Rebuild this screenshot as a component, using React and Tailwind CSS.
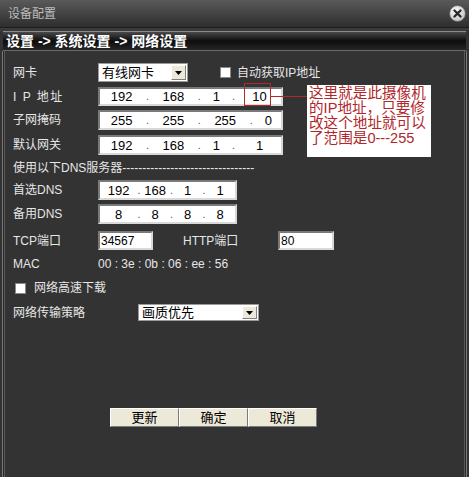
import React from "react";

const CJK = { fontFamily: '"Liberation Sans", "Noto Sans CJK SC", sans-serif' };

function Sunken({ className = "", children }) {
  return (
    <div
      className={
        "bg-white border-2 border-t-[#7a7a7a] border-l-[#7a7a7a] border-b-[#d8d8d8] border-r-[#d8d8d8] text-black " +
        className
      }
    >
      {children}
    </div>
  );
}

function Arrow() {
  return (
    <div className="w-[15px] h-full bg-[#ece9d8] border border-t-white border-l-white border-b-[#808080] border-r-[#808080] flex items-center justify-center">
      <svg width="7" height="4" viewBox="0 0 7 4">
        <polygon points="0,0 7,0 3.5,4" fill="#000" />
      </svg>
    </div>
  );
}

function Select({ className, text }) {
  return (
    <div
      className={
        "bg-white border border-[#9a9a9a] flex items-stretch text-black text-[13px] " + className
      }
    >
      <div className="flex-1 flex items-center pl-[3px] leading-none">{text}</div>
      <div className="p-[1px]">
        <Arrow />
      </div>
    </div>
  );
}

function IpField({ className, values, seg, dot }) {
  return (
    <Sunken className={"flex items-center text-[13px] leading-none " + className}>
      {values.map((v, i) => (
        <React.Fragment key={i}>
          <div className="flex items-center justify-center h-full" style={{ width: seg[i] }}>
            {v}
          </div>
          {i < 3 && (
            <div className="text-[11px] text-[#555] text-center" style={{ width: dot }}>
              .
            </div>
          )}
        </React.Fragment>
      ))}
    </Sunken>
  );
}

function Label({ children, className = "" }) {
  return (
    <div className={"w-[85px] text-[12px] text-[#e6e6e6] leading-none " + className}>
      {children}
    </div>
  );
}

function Btn({ children }) {
  return (
    <div className="w-[69px] h-[19px] bg-[#ece9d8] border border-t-white border-l-white border-b-[#7a7a7a] border-r-[#7a7a7a] flex items-center justify-center text-[13px] text-black leading-none">
      {children}
    </div>
  );
}

export default function App() {
  return (
    <div className="w-[469px] h-[477px] bg-[#333333] relative overflow-hidden flex flex-col" style={CJK}>
      {/* title bar */}
      <div className="h-[28px] shrink-0 bg-gradient-to-b from-[#5a5a5a] via-[#444444] to-[#2e2e2e] border-b border-[#1e1e1e] flex items-center justify-between pl-[8px] pr-[3px]">
        <div className="text-[12px] text-[#bdbdbd] leading-none">设备配置</div>
        <svg width="17" height="17" viewBox="0 0 17 17">
          <defs>
            <radialGradient id="cg" cx="40%" cy="35%" r="70%">
              <stop offset="0%" stopColor="#ffffff" />
              <stop offset="100%" stopColor="#bdbdbd" />
            </radialGradient>
          </defs>
          <circle cx="8.5" cy="8.5" r="8" fill="url(#cg)" stroke="#555" strokeWidth="0.8" />
          <path d="M5.5 5.5 L11.5 11.5 M11.5 5.5 L5.5 11.5" stroke="#2a2a2a" strokeWidth="2.4" strokeLinecap="round" />
        </svg>
      </div>
      <div className="h-[3px] shrink-0 bg-[#3a3a3a]" />
      {/* breadcrumb */}
      <div className="h-[20px] shrink-0 mx-[3px] border-t border-[#8a8a8a] border-b border-b-[#6a6a6a] bg-gradient-to-b from-[#4a4a4a] via-[#0e0e0e] to-[#262626] flex items-center pl-[3px]">
        <div className="text-[14px] font-bold text-white leading-none">设置 -&gt; 系统设置 -&gt; 网络设置</div>
      </div>

      {/* body */}
      <div className="flex-1 flex mx-[2px]">
        <div className="w-[1px] bg-[#7a7a7a]" />
        <div className="w-[1px] bg-[#262626]" />
        <div className="w-[1px] bg-[#5a5a5a]" />
        <div className="flex-1 flex flex-col pl-[8px] relative">
          {/* 网卡 */}
          <div className="mt-[12px] h-[19px] flex items-center">
            <Label>网卡</Label>
            <Select className="w-[90px] h-[19px]" text="有线网卡" />
            <div className="ml-[32px] w-[11px] h-[11px] bg-white border border-[#8a8a8a]" />
            <div className="ml-[6px] text-[12px] text-[#e6e6e6] leading-none">自动获取IP地址</div>
          </div>
          {/* IP */}
          <div className="mt-[5px] h-[19px] flex items-center">
            <Label className="tracking-[1.5px]">I P 地址</Label>
            <div className="relative">
              <IpField className="w-[185px] h-[19px]" values={["192", "168", "1", "10"]} seg={[44, 44, 26, 44]} dot={9} />
              <div className="absolute left-[146px] top-[-4px] w-[27px] h-[23px] border border-[#b02a2a]" />
              <div className="absolute left-[173px] top-[9px] w-[42px] h-[1px] bg-[#b02a2a]" />
            </div>
          </div>
          {/* subnet */}
          <div className="mt-[4px] h-[20px] flex items-center">
            <Label>子网掩码</Label>
            <IpField className="w-[185px] h-[20px]" values={["255", "255", "255", "0"]} seg={[44, 44, 44, 26]} dot={9} />
          </div>
          {/* gateway */}
          <div className="mt-[5px] h-[20px] flex items-center">
            <Label>默认网关</Label>
            <IpField className="w-[185px] h-[20px]" values={["192", "168", "1", "1"]} seg={[44, 44, 26, 44]} dot={9} />
          </div>
          {/* DNS heading */}
          <div className="mt-[5px] h-[16px] flex items-center text-[12px] text-[#e6e6e6] leading-none whitespace-nowrap">
            使用以下DNS服务器---------------------------------
          </div>
          <div className="mt-[4px] h-[20px] flex items-center">
            <Label>首选DNS</Label>
            <IpField className="w-[139px] h-[20px]" values={["192", "168", "1", "1"]} seg={[38, 30, 30, 30]} dot={3} />
          </div>
          <div className="mt-[4px] h-[20px] flex items-center">
            <Label>备用DNS</Label>
            <IpField className="w-[139px] h-[20px]" values={["8", "8", "8", "8"]} seg={[38, 30, 30, 30]} dot={3} />
          </div>
          {/* TCP */}
          <div className="mt-[7px] h-[19px] flex items-center">
            <Label>TCP端口</Label>
            <Sunken className="w-[55px] h-[19px] flex items-center text-[12px] leading-none pl-[1px]">34567</Sunken>
            <div className="ml-[30px] w-[95px] text-[12px] text-[#e6e6e6] leading-none">HTTP端口</div>
            <Sunken className="w-[56px] h-[19px] flex items-center text-[12px] leading-none pl-[1px]">80</Sunken>
          </div>
          {/* MAC */}
          <div className="mt-[6px] h-[16px] flex items-center">
            <Label className="text-[11px]">MAC</Label>
            <div className="text-[12px] text-[#e6e6e6] leading-none whitespace-pre">00 : 3e : 0b : 06 : ee : 56</div>
          </div>
          {/* checkbox */}
          <div className="mt-[8px] h-[16px] flex items-center">
            <div className="ml-[2px] w-[11px] h-[11px] bg-white border border-[#8a8a8a]" />
            <div className="ml-[8px] text-[12px] text-[#e6e6e6] leading-none">网络高速下载</div>
          </div>
          {/* strategy */}
          <div className="mt-[8px] h-[17px] flex items-center">
            <Label className="w-[125px]">网络传输策略</Label>
            <Select className="w-[121px] h-[17px]" text="画质优先" />
          </div>
          {/* buttons */}
          <div className="mt-[87px] flex pl-[97px]">
            <Btn>更新</Btn>
            <Btn>确定</Btn>
            <Btn>取消</Btn>
          </div>

          {/* annotation */}
          <div className="absolute left-[302px] top-[34px] w-[124px] h-[72px] bg-white pl-[2px] pt-[1px]">
            <div className="text-[14.6px] leading-[15px] text-[#b0262a] whitespace-nowrap">
              这里就是此摄像机
              <br />
              的IP地址，只要修
              <br />
              改这个地址就可以
              <br />
              了范围是0---255
            </div>
          </div>
        </div>
        <div className="w-[1px] bg-[#5a5a5a]" />
        <div className="w-[1px] bg-[#262626]" />
        <div className="w-[1px] bg-[#7a7a7a]" />
      </div>
    </div>
  );
}
